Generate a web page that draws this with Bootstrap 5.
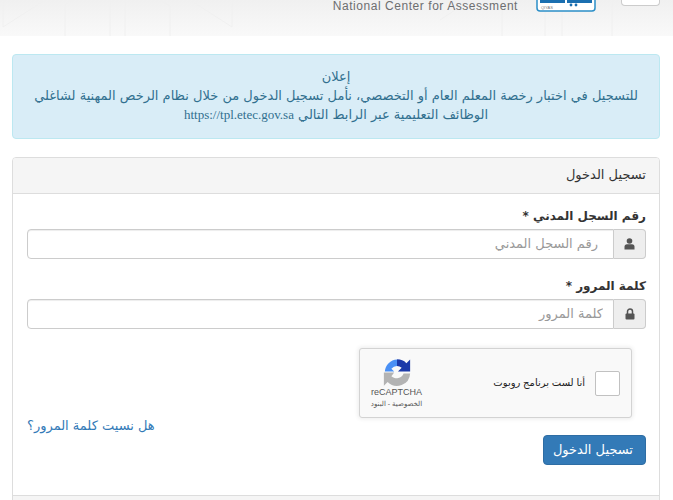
<!DOCTYPE html>
<html lang="ar" dir="rtl">
<head>
<meta charset="utf-8">
<title>تسجيل الدخول</title>
<link rel="stylesheet" href="https://cdn.jsdelivr.net/npm/bootstrap@5.3.0/dist/css/bootstrap.min.css">
<style>
html,body{height:500px;overflow:hidden}
body{font-family:"DejaVu Sans",sans-serif;font-size:13px;line-height:20px;color:#333;background:#fff}
.top-band{position:relative;height:36px;background:linear-gradient(#f0f0f0,#f9f9f9);padding:0 13px 0 0;overflow:hidden}
.band-art{position:absolute;left:0;top:0;width:673px;height:36px}
.menu-stub{position:relative;width:39px;height:6px;border:1px solid #ccc;border-top:0;border-radius:0 0 4px 4px;background:#fff}
.qiyas-logo{position:relative;width:60px;height:12px;margin-right:25px}
.nca{position:relative;font-family:"Liberation Sans",sans-serif;font-size:12px;letter-spacing:.55px;line-height:12px;color:#6d6e70;margin-right:18px;direction:ltr}
.page-wrap{padding:18px 13px 0 12px}
.notice{height:85px;background:#d9edf7;border:1px solid #bce8f1;color:#31708f;border-radius:4px;padding:12px 15px;text-align:center;margin-bottom:18px;line-height:19px}
.notice-url{font-family:"Liberation Serif",serif;font-size:13px}
.login-panel{border:1px solid #ddd;border-radius:4px;height:360px}
.login-head{height:36px;background:#f5f5f5;border-bottom:1px solid #ddd;padding:7px 13px;line-height:20px;border-radius:3px 3px 0 0;color:#333}
.login-body{padding:11px 13px 0 14px}
.field-label{font-size:12px;font-weight:700;line-height:20px;margin-bottom:4px;padding-top:1px;height:20px;color:#333;display:block}
.field-row{height:30px;margin-bottom:16px}
.addon{width:32px;background:#eee;border:1px solid #ccc;border-left:0;border-radius:0 4px 4px 0;color:#555}
.text-field{flex:1;min-width:0;border:1px solid #ccc;border-radius:4px 0 0 4px;padding:0 15px;font:inherit;color:#555;background:#fff;box-shadow:inset 0 1px 1px rgba(0,0,0,.075)}
.pass-field{padding-right:10px}
.text-field::placeholder{color:#999;opacity:1}
.captcha-row{margin-top:19px}
.captcha{width:273px;height:70px;margin-right:14px;background:#f9f9f9;border:1px solid #d3d3d3;border-radius:3px;box-shadow:0 0 4px 1px rgba(0,0,0,.08);padding:0 11px 0 0;font-family:"Liberation Sans","DejaVu Sans",sans-serif}
.tick{width:25px;height:25px;background:#fff;border:1px solid #c1c1c1;border-radius:2px}
.captcha-text{font-size:10px;color:#222;margin-right:10px;flex:1}
.captcha-brand{width:73px;color:#555;text-align:center;line-height:1}
.brand-name{font-size:9px;line-height:10px;direction:ltr}
.brand-links{font-size:7px;line-height:9px;margin-top:2px}
.forgot-row{margin-top:-2px;margin-bottom:-1px}
.forgot{color:#337ab7;text-decoration:none;line-height:20px}
.submit-btn{background:#337ab7;border:1px solid #2e6da4;color:#fff;border-radius:4px;font-size:13px;line-height:20px;padding:4px 12px;height:30px;width:103px;white-space:nowrap}
.panel-end{height:5px;border-top:1px solid #ddd;background:#f5f5f5;margin:30px -13px 0 -14px}
</style>
</head>
<body>
<header class="top-band d-flex align-items-start">
  <svg class="band-art" viewBox="0 0 673 36" aria-hidden="true"><g fill="none" stroke="#f0f0f0"><path d="M3 0V27L45 0M65 36V5L72 0M110 0V36M125 0V36M160 0L170 6V36M190 0L232 27V0"/><path d="M440 20L470 0M502 0V36M545 0V36M562 0V36M612 0V36"/></g></svg>
  <div class="menu-stub"></div>
  <svg class="qiyas-logo" viewBox="0 0 60 12" aria-hidden="true"><path d="M1 0V8Q1 11 4 11H56Q59 11 59 8V0" fill="#fff" stroke="#2b8fc8" stroke-width="1.500"/><rect x="4" y="0" width="25" height="3" fill="#1b6fb0"/><rect x="31" y="0" width="25" height="3" fill="#1b6fb0"/><circle cx="35" cy="5" r="1.400" fill="#1b6fb0"/><circle cx="40" cy="5" r="1.400" fill="#1b6fb0"/><text x="5" y="8.500" font-family="Liberation Sans" font-size="4" fill="#777" direction="ltr">QIYAS</text></svg>
  <div class="nca">National Center for Assessment</div>
</header>
<main class="page-wrap">
  <div class="notice">إعلان<br>للتسجيل في اختبار رخصة المعلم العام أو التخصصي، نأمل تسجيل الدخول من خلال نظام الرخص المهنية لشاغلي الوظائف التعليمية عبر الرابط التالي <span class="notice-url">https://tpl.etec.gov.sa</span></div>
  <section class="login-panel">
    <div class="login-head">تسجيل الدخول</div>
    <form class="login-body">
      <label class="field-label">رقم السجل المدني *</label>
      <div class="field-row d-flex">
        <span class="addon d-flex align-items-center justify-content-center"><svg width="11" height="12" viewBox="0 0 11 12"><circle cx="5.500" cy="3" r="2.800" fill="#555"/><path d="M.5 11.500V8.800Q.5 6.300 3 6.300H8Q10.500 6.300 10.500 8.800V11.500Z" fill="#555"/></svg></span>
        <input class="text-field" placeholder="رقم السجل المدني">
      </div>
      <label class="field-label">كلمة المرور *</label>
      <div class="field-row d-flex">
        <span class="addon d-flex align-items-center justify-content-center"><svg width="10" height="12" viewBox="0 0 10 12"><path d="M2.500 6V3.500a2.500 2.500 0 0 1 5 0V6" fill="none" stroke="#555" stroke-width="1.500"/><rect x=".5" y="5.500" width="9" height="6" rx="1" fill="#555"/></svg></span>
        <input class="text-field pass-field" placeholder="كلمة المرور">
      </div>
      <div class="captcha-row d-flex">
        <div class="captcha d-flex align-items-center">
          <div class="tick"></div>
          <div class="captcha-text">أنا لست برنامج روبوت</div>
          <div class="captcha-brand">
            <svg width="30" height="29" viewBox="0 0 32 30" aria-hidden="true"><path d="M16 1A14 14 0 0 1 26 5L30 1V14H17L21 10A8 8 0 0 0 16 8Z" fill="#1c3aa9"/><path d="M3 14A14 14 0 0 1 16 1V8A8 8 0 0 0 10 11L13 14Z" fill="#4a90f5"/><path d="M2 15H13L10 19A8 8 0 0 0 23 16H30A14 14 0 0 1 6 25L2 29Z" fill="#b3b3b3"/></svg>
            <div class="brand-name">reCAPTCHA</div>
            <div class="brand-links">الخصوصية - البنود</div>
          </div>
        </div>
      </div>
      <div class="forgot-row d-flex justify-content-end"><a class="forgot" href="#">هل نسيت كلمة المرور؟</a></div>
      <div class="d-flex justify-content-start"><button type="button" class="submit-btn">تسجيل الدخول</button></div>
      <div class="panel-end"></div>
    </form>
  </section>
</main>
<script src="https://cdn.jsdelivr.net/npm/bootstrap@5.3.0/dist/js/bootstrap.bundle.min.js"></script>
</body>
</html>
